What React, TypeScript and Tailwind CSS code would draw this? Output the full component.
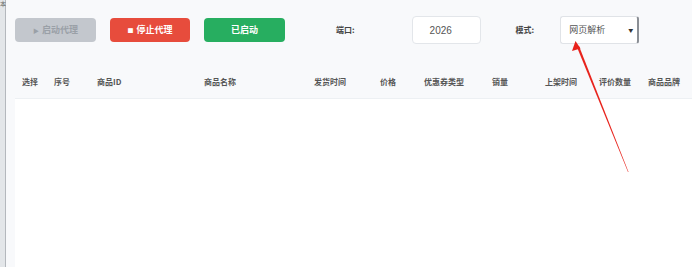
const columns = [
  { label: "选择", w: "w-[32px]" },
  { label: "序号", w: "w-[43px]" },
  { label: "商品ID", w: "w-[107px]" },
  { label: "商品名称", w: "w-[110px]" },
  { label: "发货时间", w: "w-[66px]" },
  { label: "价格", w: "w-[44px]" },
  { label: "优惠券类型", w: "w-[68px]" },
  { label: "销量", w: "w-[53px]" },
  { label: "上架时间", w: "w-[54px]" },
  { label: "评价数量", w: "w-[49px]" },
  { label: "商品品牌", w: "w-[40px]" },
]

export default function App() {
  return (
    <div className="relative flex h-[267px] w-[692px] overflow-hidden bg-white font-['Noto_Sans_CJK_SC','Noto_Sans',sans-serif]">
      {/* window behind, cut off at the left */}
      <div className="flex w-[6px] shrink-0 flex-col border-r border-[#b4b8bd] bg-[#e3e6e9]">
        <span className="text-[6px] leading-[8px] text-[#666]">本</span>
      </div>

      <div className="flex min-w-0 flex-1 flex-col bg-[#f8f9fb] pl-[9px]">
        {/* toolbar */}
        <div className="flex h-[60px] items-start pt-[16px]">
          <button className="mt-[2px] flex h-[24px] w-[81px] shrink-0 items-center justify-center gap-[3px] rounded-[4px] bg-[#c3c7cd] text-[9px] font-bold text-[#9aa0a7]">
            <span className="text-[6px]">▶</span>启动代理
          </button>
          <button className="ml-[14px] mt-[2px] flex h-[24px] w-[80px] shrink-0 items-center justify-center gap-[3px] rounded-[4px] bg-[#e74c3c] text-[9px] font-bold text-white">
            <span className="text-[6px]">■</span>停止代理
          </button>
          <button className="ml-[14px] mt-[2px] flex h-[24px] w-[81px] shrink-0 items-center justify-center rounded-[4px] bg-[#27ae60] text-[9px] font-bold text-white">
            已启动
          </button>
          <span className="ml-[51px] mt-[7px] shrink-0 text-[8px] font-bold leading-[14px] text-[#444]">端口:</span>
          <div className="ml-[57px] flex h-[28px] w-[69px] shrink-0 items-center rounded-[4px] border border-[#e3e6ea] bg-white pl-[17px] text-[10px] text-[#555] font-['Liberation_Sans',sans-serif]">
            2026
          </div>
          <span className="ml-[35px] mt-[7px] shrink-0 text-[8px] font-bold leading-[14px] text-[#444]">模式:</span>
          <div className="ml-[26px] flex h-[28px] w-[79px] shrink-0 items-center justify-between rounded-[3px] border border-[#e0e3e7] border-r-[2px] border-r-[#8b8f95] bg-white pl-[8px] pr-[4px] text-[9px] text-[#555]">
            <span>网页解析</span>
            <span className="text-[5px] text-[#333]">▼</span>
          </div>
        </div>

        {/* table */}
        <div className="flex h-[39px] items-center border-b border-[#edf0f3] pl-[7px] pt-[6px] text-[8px] font-bold text-[#555]">
          {columns.map((c) => (
            <div key={c.label} className={`${c.w} shrink-0 whitespace-nowrap`}>
              {c.label}
            </div>
          ))}
        </div>
        <div className="flex-1 bg-white" />
      </div>

      {/* annotation arrow */}
      <svg className="pointer-events-none absolute left-0 top-0" width="692" height="267" viewBox="0 0 692 267">
        <polygon points="576.5,46 579,46 628.5,172 628,172" fill="#e8231c" />
        <polygon points="575.5,41 572,51 580.5,48.5" fill="#e8231c" />
      </svg>
    </div>
  )
}
